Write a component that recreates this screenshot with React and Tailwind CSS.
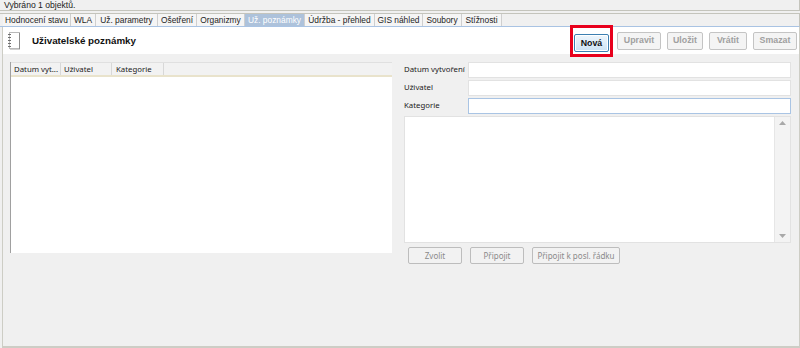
import { useState } from 'react';

const tabs = [
  { label: 'Hodnocení stavu', w: 'w-[68px]' },
  { label: 'WLA', w: 'w-[25px]' },
  { label: 'Už. parametry', w: 'w-[62px]' },
  { label: 'Ošetření', w: 'w-[39px]' },
  { label: 'Organizmy', w: 'w-[48px]' },
  { label: 'Už. poznámky', w: 'w-[60px]' },
  { label: 'Údržba - přehled', w: 'w-[70px]' },
  { label: 'GIS náhled', w: 'w-[48px]' },
  { label: 'Soubory', w: 'w-[39px]' },
  { label: 'Stížnosti', w: 'w-[40px]' },
];

function NoteIcon() {
  return (
    <svg width="14" height="18" viewBox="0 0 14 18">
      <rect x="2.5" y="0.5" width="10" height="16" fill="#fff" stroke="#b9b9b9" />
      <line x1="12.5" y1="1" x2="12.5" y2="17" stroke="#8d8d8d" />
      <line x1="3" y1="17.5" x2="13" y2="17.5" stroke="#d0d0d0" />
      {[2, 5, 8, 11, 14].map((y) => (
        <line key={y} x1="1" y1={y + 0.5} x2="4" y2={y + 0.5} stroke="#6f6f6f" />
      ))}
    </svg>
  );
}

function ToolButton({ label, w, primary }) {
  return (
    <button
      className={`h-[18px] ${w} rounded-[2px] border text-[8.8px] font-bold leading-none ${
        primary
          ? 'border-[#3c7fb1] bg-gradient-to-b from-[#eef6fc] to-[#cde3f4] text-[#111] shadow-[inset_0_0_0_1px_#fff]'
          : 'border-[#c4c4c4] bg-[#f4f4f4] text-[#a0a0a0]'
      }`}
    >
      {label}
    </button>
  );
}

function FlatButton({ label, w }) {
  return (
    <button className={`h-[17px] ${w} rounded-[2px] border border-[#bdbdbd] bg-[#f2f2f2] text-[8px] leading-none text-[#8a8a8a] font-['Noto_Sans',sans-serif]`}>
      {label}
    </button>
  );
}

function Field({ label, focused }) {
  return (
    <div className="flex items-center h-[16px] mb-[2px]">
      <span className="w-[64px] text-[7.8px] text-[#1a1a1a] font-['Noto_Sans',sans-serif]">{label}</span>
      <div
        className={`flex-1 h-[16px] bg-white border ${
          focused ? 'border-[#a9c4e4]' : 'border-[#e2e2e2]'
        }`}
      />
    </div>
  );
}

export default function App() {
  const [activeTab, setActiveTab] = useState('Už. poznámky');

  return (
    <div className="w-[800px] h-[348px] overflow-hidden bg-[#f0f0f0] flex flex-col font-['Liberation_Sans',Arial,sans-serif] text-[#222]">
      {/* Status bar */}
      <div className="h-[11px] border-b border-r border-[#c4c4bc] pl-[4px] text-[8.6px] leading-[11px] text-[#222]">
        Vybráno 1 objektů.
      </div>

      {/* Tabs */}
      <div className="mt-[2px] flex h-[14px] border-t border-r border-t-[#c4c4bc] border-r-[#c4c4bc] border-b border-b-[#a9c3e3] pl-[3px] bg-[#f0f0f0]">
        {tabs.map((t) => (
          <div
            key={t.label}
            onClick={() => setActiveTab(t.label)}
            className={`${t.w} border-r border-[#cfcfcf] text-center text-[8.4px] leading-[13px] whitespace-nowrap ${
              activeTab === t.label ? 'bg-[#adc2db] text-white' : 'bg-[#f5f5f5] text-[#1e1e1e]'
            }`}
          >
            {t.label}
          </div>
        ))}
      </div>

      {/* Main frame */}
      <div className="flex-1 ml-[2px] border-l border-r border-b-2 border-[#cdcdc5] flex flex-col">
        {/* Header */}
        <div className="h-[27px] bg-white flex items-center pl-[4px] pr-[2px]">
          <NoteIcon />
          <span className="ml-[11px] mt-[1px] text-[9.8px] font-bold text-[#111]">Uživatelské poznámky</span>
          <div className="ml-auto flex items-center gap-[6px]">
            <div className="border-[3px] border-[#e8001c] p-[1px] -mr-[2px] -ml-[4px]">
              <ToolButton label="Nová" w="w-[35px]" primary />
            </div>
            <ToolButton label="Upravit" w="w-[44px]" />
            <ToolButton label="Uložit" w="w-[36px]" />
            <ToolButton label="Vrátit" w="w-[38px]" />
            <ToolButton label="Smazat" w="w-[44px]" />
          </div>
        </div>

        {/* Content */}
        <div className="flex pt-[8px] pl-[7px]">
          {/* Grid */}
          <div className="w-[382px] h-[191px] bg-white border-l border-[#a0a0a0] flex flex-col">
            <div className="h-[15px] flex bg-[#f2f2f2] border-t border-[#e0e0e0] border-b-2 border-b-[#e9e3cc] text-[7.8px] leading-[13px] text-[#1a1a1a] font-['Noto_Sans',sans-serif]">
              <div className="w-[50px] pl-[3px] border-r border-[#d8d8d8] whitespace-nowrap">Datum vyt...</div>
              <div className="w-[51px] pl-[3px] border-r border-[#d8d8d8]">Uživatel</div>
              <div className="w-[52px] pl-[4px] border-r border-[#d8d8d8]">Kategorie</div>
            </div>
          </div>

          {/* Form */}
          <div className="ml-[12px] w-[387px]">
            <Field label="Datum vytvoření" />
            <Field label="Uživatel" />
            <Field label="Kategorie" focused />
            <div className="h-[127px] bg-white border border-[#e2e2e2] flex justify-end">
              <div className="w-[16px] h-full bg-[#f3f3f3] border-l border-[#e6e6e6] flex flex-col items-center justify-between py-[4px]">
                <svg width="7" height="4" viewBox="0 0 7 4"><path d="M0 4 L3.5 0 L7 4 Z" fill="#a8a8a8" /></svg>
                <svg width="7" height="4" viewBox="0 0 7 4"><path d="M0 0 L7 0 L3.5 4 Z" fill="#a8a8a8" /></svg>
              </div>
            </div>
            <div className="flex gap-[8px] mt-[4px] pl-[4px]">
              <FlatButton label="Zvolit" w="w-[54px]" />
              <FlatButton label="Připojit" w="w-[54px]" />
              <FlatButton label="Připojit k posl. řádku" w="w-[88px]" />
            </div>
          </div>
        </div>
      </div>
    </div>
  );
}
